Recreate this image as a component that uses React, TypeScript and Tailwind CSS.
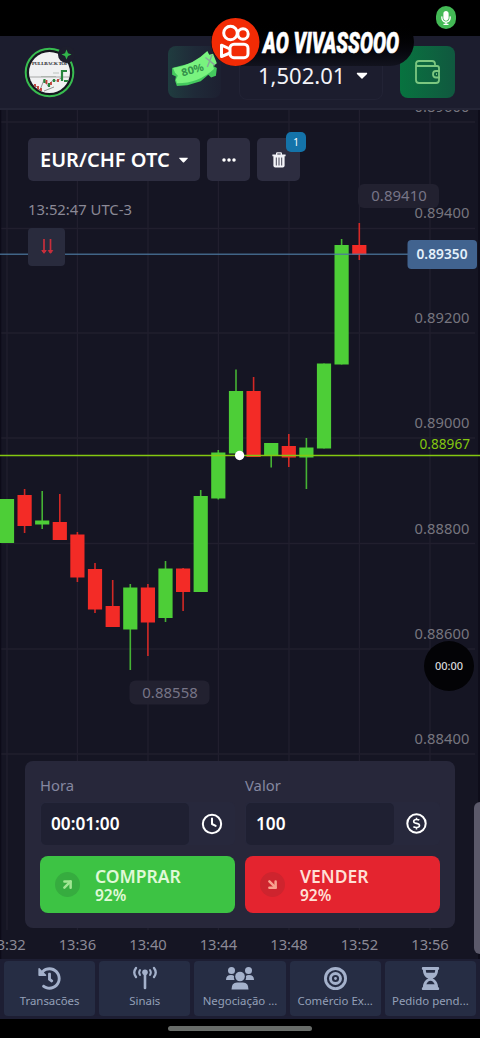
import { FC, ReactNode } from "react";
import { FaCaretDown, FaHistory, FaHourglassHalf, FaMicrophone } from "react-icons/fa";
import { FaBullseye, FaEllipsis } from "react-icons/fa6";
import { FiArrowDownRight, FiArrowUpRight, FiClock } from "react-icons/fi";

interface Candle {
  x: number;
  high: number;
  top: number;
  bottom: number;
  low: number;
  up?: boolean;
}

const candles: Candle[] = [
  { x: 7, high: 499, top: 499, bottom: 543, low: 543, up: true },
  { x: 24.6, high: 489, top: 495, bottom: 526, low: 533 },
  { x: 42.2, high: 491, top: 520.5, bottom: 524.5, low: 529, up: true },
  { x: 59.8, high: 494, top: 522, bottom: 540, low: 540 },
  { x: 77.4, high: 532, top: 534.5, bottom: 577.5, low: 582 },
  { x: 95, high: 563, top: 569, bottom: 609.5, low: 613 },
  { x: 112.7, high: 580, top: 606, bottom: 627, low: 627 },
  { x: 130.3, high: 584, top: 587.5, bottom: 629.5, low: 670, up: true },
  { x: 147.9, high: 584, top: 587.5, bottom: 622.5, low: 656 },
  { x: 165.5, high: 561, top: 568.5, bottom: 618, low: 622, up: true },
  { x: 183.1, high: 568, top: 568.5, bottom: 592, low: 611 },
  { x: 200.7, high: 490, top: 496, bottom: 592, low: 592, up: true },
  { x: 218.3, high: 450, top: 452.5, bottom: 498.5, low: 499.5, up: true },
  { x: 236, high: 369.5, top: 391, bottom: 453.5, low: 453.5, up: true },
  { x: 253.6, high: 377, top: 391, bottom: 457, low: 457 },
  { x: 271.2, high: 443, top: 443, bottom: 456, low: 467.5, up: true },
  { x: 288.8, high: 434, top: 446, bottom: 457.5, low: 467 },
  { x: 306.4, high: 438, top: 447.5, bottom: 457.5, low: 489, up: true },
  { x: 324, high: 363.5, top: 363.5, bottom: 448.5, low: 448.5, up: true },
  { x: 341.6, high: 239, top: 245, bottom: 364.5, low: 364.5, up: true },
  { x: 359.3, high: 223, top: 245, bottom: 254.5, low: 260 },
];

const prices = [
  { label: "0.89600", y: 112 },
  { label: "0.89400", y: 218 },
  { label: "0.89200", y: 323 },
  { label: "0.89000", y: 428 },
  { label: "0.88800", y: 533.5 },
  { label: "0.88600", y: 638.5 },
  { label: "0.88400", y: 743.5 },
];

const times = [
  { label: "13:32", x: 7 },
  { label: "13:36", x: 77.4 },
  { label: "13:40", x: 148 },
  { label: "13:44", x: 218.4 },
  { label: "13:48", x: 289 },
  { label: "13:52", x: 359.4 },
  { label: "13:56", x: 430 },
];

const gridY = [122, 228.5, 333, 438, 543.5, 649, 754];

const Chart = () => (
  <svg className="absolute inset-0" width="480" height="849" viewBox="0 110 480 849">
    {times.map((t) => (
      <path key={t.label} d={`M${t.x} 110V930`} stroke="#211f2e" strokeWidth="1.3" />
    ))}
    {gridY.map((y) => (
      <path key={y} d={`M0 ${y}H475`} stroke="#211f2e" strokeWidth="1.3" />
    ))}
    <path d="M.5 110V959M479 110V959" stroke="#0c0b18" strokeWidth="1.5" />
    {candles.map((c) => (
      <g key={c.x} fill={c.up ? "#4dce37" : "#f32b26"}>
        <rect x={c.x - 0.8} y={c.high} width="1.6" height={c.low - c.high} opacity="0.85" />
        <rect x={c.x - 7.1} y={c.top} width="14.2" height={c.bottom - c.top} />
      </g>
    ))}
    <path d="M0 254.2H410" stroke="#4c79a0" strokeWidth="1.5" opacity="0.8" />
    <path d="M0 455.5H480" stroke="#84c810" strokeWidth="1.5" />
    <circle cx="239.6" cy="455.5" r="4.7" fill="#fff" />
    <g fontSize="14.7" fill="#77757f">
      {prices.map((p) => (
        <text key={p.label} x="469.5" y={p.y} textAnchor="end" textLength="55">
          {p.label}
        </text>
      ))}
      {times.map((t) => (
        <text key={t.label} x={t.x} y="950" textAnchor="middle" textLength="37.5" fill="#8b8996">
          {t.label}
        </text>
      ))}
    </g>
    <text x="470" y="449" textAnchor="end" textLength="50.5" fontSize="13.6" fill="#84c810">
      0.88967
    </text>
    <g fontSize="14.9" fill="#777587">
      <rect x="358" y="184" width="81" height="24" rx="6" fill="#222130" />
      <text x="399" y="201" textAnchor="middle" textLength="55.5">
        0.89410
      </text>
      <rect x="129.5" y="680.5" width="80" height="24" rx="6" fill="#222130" />
      <text x="170" y="697.5" textAnchor="middle" textLength="55.5">
        0.88558
      </text>
    </g>
    <rect x="407.5" y="240" width="69.5" height="29" rx="4" fill="#41638f" />
    <text x="442" y="259" textAnchor="middle" textLength="51" fontSize="13.7" fontWeight="600" fill="#e4f0fb">
      0.89350
    </text>
  </svg>
);

const Avatar = () => (
  <svg width="52" height="54" viewBox="0 0 52 54">
    <circle cx="25.5" cy="26.5" r="23.8" fill="#15171f" stroke="#38bd50" strokeWidth="2" />
    <clipPath id="avatar">
      <circle cx="25.5" cy="26.5" r="20.5" />
    </clipPath>
    <g clipPath="url(#avatar)">
      <rect width="52" height="54" fill="#f0f1f2" />
      <text x="8" y="19" fontSize="5" fontWeight="700" fontFamily="Liberation Serif, serif" fill="#24262c" textLength="36">
        PULLBACK TOP
      </text>
      <path d="M5 31H46" stroke="#888" strokeWidth=".7" />
      <path d="M17 30.5H32M29 27H35" stroke="#9ba69a" strokeWidth=".6" />
      <path d="M10 38L16 44 20 34 24 40 29 34 33 35 37 32" stroke="#555" strokeWidth=".6" fill="none" />
      <path d="M20.500 33v4M25 37v4M30 33v3M38 24v11M38 25h5M40 35h4" stroke="#28853e" strokeWidth="2.2" />
      <path d="M11 38v3M14 40v4M17 42v3M22.500 34v4M27 36v3M34 33v3" stroke="#c13b34" strokeWidth="1.8" />
      <path d="M20 45L30 41" stroke="#777" strokeWidth=".8" />
    </g>
    <circle cx="42.5" cy="8.5" r="8.5" fill="#1d1e2d" />
    <path d="M42.5 3.5L44 7.2 47.5 8.6 44 10 42.500 13.600 41 10 37.500 8.600 41 7.200Z" fill="#32b64b" />
  </svg>
);

const Coupon = () => (
  <svg className="-mt-[7px] ml-[3px] shrink-0" width="47" height="39" viewBox="0 0 49 41">
    <path d="M1 20L12 17 43 10 45 14 43 17 48 20 47 28 42 30 39 27 31 34 17 38 6 39 4 33 5 29 1 27Z" fill="#44c95e" />
    <path d="M2 20Q23 17 38 2L40 6 44 5 48 15 44 18 45 21Q29 36 6 36L5 32 7 28 4 25Z" fill="#79f37f" />
    <text x="12" y="29" fontSize="11" fontWeight="700" fill="#35944b" transform="rotate(-16 12 29)" textLength="24" lengthAdjust="spacingAndGlyphs">
      80%
    </text>
    <path d="M36 9L46 17M43 6L38 19" stroke="#87a69a" strokeWidth="1.5" />
  </svg>
);

const StreamBadge = () => (
  <div className="absolute left-[211px] top-[18px] flex h-12 w-[203px] items-center rounded-full bg-linear-to-b from-black to-[#12131e]">
    <svg className="shrink-0" width="49" height="48" viewBox="0 0 49 48">
      <circle cx="24.5" cy="24" r="24" fill="#f22b05" />
      <g fill="none" stroke="#fff" strokeWidth="3">
        <circle cx="19.5" cy="15" r="6.8" />
        <circle cx="32" cy="16" r="5.2" />
        <rect x="19" y="26.2" width="18" height="13.5" rx="4" />
        <path d="M19 31L10.500 27.200V38.500L19 35" strokeLinejoin="round" />
      </g>
    </svg>
    <svg width="154" height="36" viewBox="0 0 154 36">
      <text
        x="3"
        y="28.5"
        fontFamily="Roboto, sans-serif"
        fontSize="29"
        fontWeight="900"
        fontStyle="italic"
        fill="#fff"
        stroke="#fff"
        strokeWidth="0.6"
        textLength="136"
        lengthAdjust="spacingAndGlyphs"
      >
        AO VIVASSOOO
      </text>
    </svg>
  </div>
);

const Header = () => (
  <header className="flex h-[74px] items-start justify-between border-b-2 border-[#242536] bg-[#1c1d2e] pl-[24px] pr-[25px] pt-[10px]">
    <Avatar />
    <div className="flex">
      <div className="flex h-[52px] w-[53px] items-center rounded-lg bg-linear-to-r from-[#1f3c3f] via-[#1f2a38] to-[#1d2031]">
        <Coupon />
      </div>
      <div className="ml-[18px] mr-[17px] flex h-[54px] w-[144px] items-center rounded-lg border border-[#222335] pl-[18px] pt-1">
        <span className="text-[22px] text-[#f3f3f8]">1,502.01</span>
        <FaCaretDown className="ml-[8px] size-[18px] text-white" />
      </div>
      <div className="flex h-[52px] w-[55px] items-center justify-center rounded-lg bg-linear-to-r from-[#07733f] to-[#10583f]">
        <svg width="26" height="24" viewBox="0 0 26 24" fill="none" stroke="#7cc780" strokeWidth="1.8" strokeLinejoin="round">
          <path d="M1 5V20Q1 23 4 23H21Q24 23 24 20V8Q24 6 22 6H3Q1 6 1 4Q1 1 4 1H17Q20 1 20 4V6" />
          <path d="M25 11H21Q18 11 18 14.2T21 17.5H25" />
          <path d="M21 14.2H22" />
        </svg>
      </div>
    </div>
  </header>
);

const Toolbar = () => (
  <div className="flex gap-[7px]">
    <button className="flex h-[43px] w-[172px] items-center rounded-[5px] bg-[#2d2d40] pl-3 text-[20px] font-semibold text-white">
      <span className="whitespace-nowrap">EUR/CHF OTC</span>
      <FaCaretDown className="ml-[6px] size-[15px] shrink-0" />
    </button>
    <button className="flex h-[43px] w-[43px] items-center justify-center rounded-[5px] bg-[#2d2d40]">
      <FaEllipsis className="size-4 text-white" />
    </button>
    <button className="relative flex h-[43px] w-[43px] items-center justify-center rounded-[5px] bg-[#2d2d40]">
      <svg width="14" height="16" viewBox="0 0 14 16" fill="#f3f3f8">
        <path d="M4 2.5V1.5Q4 .3 5.2.3H8.8Q10 .3 10 1.5V2.5H13.6V4.2H.4V2.5ZM5.3 2.5H8.7V1.5H5.3Z" />
        <path d="M1.4 4H12.6V13.5Q12.6 15.5 10.6 15.5H3.4Q1.4 15.5 1.4 13.5Z" />
        <path d="M4.3 5.5V13.5M7 5.5V13.5M9.7 5.5V13.5" stroke="#454557" strokeWidth="1" />
      </svg>
      <span className="absolute -right-[6px] -top-[6px] flex h-5 w-5 items-center justify-center rounded-[5px] bg-[#1473a9] text-[10px] text-white">
        1
      </span>
    </button>
  </div>
);

interface FieldProps {
  label: string;
  value: string;
  icon: ReactNode;
}

const Field: FC<FieldProps> = ({ label, value, icon }) => (
  <div className="w-[195px]">
    <div className="h-5 text-[14.8px] leading-[19px] text-[#8587a0]">{label}</div>
    <div className="mt-[6px] flex h-[43px] items-center rounded-[5px] bg-[#27283c]">
      <div className="ml-[1px] flex h-[42px] w-[148px] items-center rounded-[5px] bg-[#1f2032] pl-[10px] text-[17.2px] font-semibold text-white">
        {value}
      </div>
      <div className="ml-[12px] text-white">{icon}</div>
    </div>
  </div>
);

const DollarIcon = () => (
  <svg width="21" height="21" viewBox="0 0 21 21" fill="none" stroke="currentColor">
    <circle cx="10.5" cy="10.5" r="9.2" strokeWidth="2" />
    <path d="M13.3 7.2Q12.5 6.5 10.5 6.5C8.6 6.5 7.7 7.2 7.7 8.4 7.7 11.2 13.5 9.6 13.5 12.5 13.5 13.8 12.3 14.5 10.5 14.5Q8.3 14.5 7.4 13.6M10.5 4.7V6.5M10.5 14.5V16.4" strokeWidth="1.6" />
  </svg>
);

const OrderPanel = () => (
  <div className="-ml-[3px] flex h-[167px] w-[430px] flex-col rounded-lg bg-[#27273a] px-[15px] pt-[15px]">
    <div className="flex justify-between">
      <Field label="Hora" value="00:01:00" icon={<FiClock className="size-[22px]" strokeWidth={2.2} />} />
      <Field label="Valor" value="100" icon={<DollarIcon />} />
    </div>
    <div className="mt-[11px] flex justify-between">
      <button className="flex h-[57px] w-[195px] items-center rounded-lg bg-[#3dc344] pl-[15px] text-left text-[#e0f9d8]">
        <span className="flex size-[25px] items-center justify-center rounded-full bg-[#36ac3f]">
          <FiArrowUpRight className="size-[15px] text-[#a1e693]" strokeWidth={4} />
        </span>
        <span className="ml-[15px] flex flex-col gap-px">
          <span className="text-[17.5px] font-semibold leading-5">COMPRAR</span>
          <span className="text-[15.5px] font-semibold leading-[17px]">92%</span>
        </span>
      </button>
      <button className="flex h-[57px] w-[195px] items-center rounded-lg bg-[#e4242f] pl-[15px] text-left text-[#ffdfd5]">
        <span className="flex size-[25px] items-center justify-center rounded-full bg-[#ce242e]">
          <FiArrowDownRight className="size-[15px] text-[#f8a18e]" strokeWidth={4} />
        </span>
        <span className="ml-[15px] flex flex-col gap-px">
          <span className="text-[17.5px] font-semibold leading-5">VENDER</span>
          <span className="text-[15.5px] font-semibold leading-[17px]">92%</span>
        </span>
      </button>
    </div>
  </div>
);

const SignalIcon = () => (
  <svg width="24" height="24" viewBox="0 0 24 24" fill="none" stroke="currentColor" strokeLinecap="round">
    <path d="M3 2Q-.5 6.5 3 11M21 2Q24.5 6.5 21 11" strokeWidth="2.3" />
    <path d="M7 4Q5.3 6.5 7 9M17 4Q18.7 6.5 17 9" strokeWidth="2" />
    <circle cx="12" cy="6.3" r="2.8" fill="currentColor" stroke="none" />
    <path d="M12 7V22" strokeWidth="2.6" />
  </svg>
);

const PeopleIcon = () => (
  <svg width="28" height="24" viewBox="0 0 28 24" fill="currentColor">
    <circle cx="5.500" cy="4.500" r="3.500" />
    <circle cx="22.500" cy="4.500" r="3.500" />
    <path d="M0 14Q0 9 5 9Q7.300 9 8 10Q7.500 12.500 8.500 14ZM28 14Q28 9 23 9Q20.700 9 20 10Q20.500 12.500 19.500 14Z" />
    <circle cx="14" cy="10.500" r="4.800" />
    <path d="M5.500 23.500Q5.500 16.500 11 16.500H17Q22.500 16.500 22.500 23.500Z" />
  </svg>
);

const navItems = [
  { label: "Transacões", icon: <FaHistory className="size-[23px]" /> },
  { label: "Sinais", icon: <SignalIcon /> },
  { label: "Negociação ...", icon: <PeopleIcon /> },
  { label: "Comércio Ex...", icon: <FaBullseye className="size-[23px]" /> },
  { label: "Pedido pend...", icon: <FaHourglassHalf className="size-[23px]" /> },
];

const BottomNav = () => (
  <nav className="flex h-[60px] gap-1 bg-[#1d1e33] px-1 pt-[2px]">
    {navItems.map((item) => (
      <button
        key={item.label}
        className="flex h-[55px] min-w-0 flex-1 flex-col items-center rounded-[4px] bg-[#262d44] pt-[5px] text-[#a4b1cb]"
      >
        <span className="flex h-6 items-center">{item.icon}</span>
        <span className="mt-[3px] whitespace-nowrap text-[11.4px] leading-4 text-[#94a0b8]">{item.label}</span>
      </button>
    ))}
  </nav>
);

const App = () => {
  return (
    <div className="relative flex h-[1038px] w-[480px] flex-col overflow-hidden bg-black font-['Noto_Sans',sans-serif]">
      <div className="flex h-9 shrink-0 justify-end pr-[24px] pt-[6px]">
        <span className="flex h-[23px] w-[20px] items-center justify-center rounded-full bg-[#43b955]">
          <FaMicrophone className="size-[14px] text-white" />
        </span>
      </div>
      <Header />
      <main className="relative h-[849px] bg-[#151523]">
        <Chart />
        <div className="relative flex h-full flex-col justify-between px-7 pb-[31px] pt-7">
          <div>
            <Toolbar />
            <div className="mt-[18px] text-[14.8px] leading-5 text-[#8b8996]">13:52:47 UTC-3</div>
            <div className="mt-[9px] flex h-[38px] w-[37px] items-center justify-center rounded-[4px] bg-[#292b3d]">
              <svg width="14" height="16" viewBox="0 0 14 16" fill="none" stroke="#c72e3b" strokeWidth="1.7">
                <path d="M4 0V14M10.5 0V14" />
                <path d="M1.800 11.500L4 14.300 6.200 11.500ZM8.300 11.500L10.500 14.300 12.700 11.500Z" fill="#c72e3b" strokeWidth="1" />
              </svg>
            </div>
          </div>
          <OrderPanel />
        </div>
        <div className="absolute left-[424px] top-[531px] flex size-[50px] items-center justify-center rounded-full bg-[#030306] text-[11px] font-medium text-[#d9d9dc]">
          00:00
        </div>
        <div className="absolute right-0 top-[692px] h-[152px] w-[6px] rounded-l-md bg-[#5b596a]" />
      </main>
      <BottomNav />
      <div className="mx-auto mt-[7px] h-[5px] w-[144px] rounded-full bg-[#686c69]" />
      <StreamBadge />
    </div>
  );
};

export default App;
